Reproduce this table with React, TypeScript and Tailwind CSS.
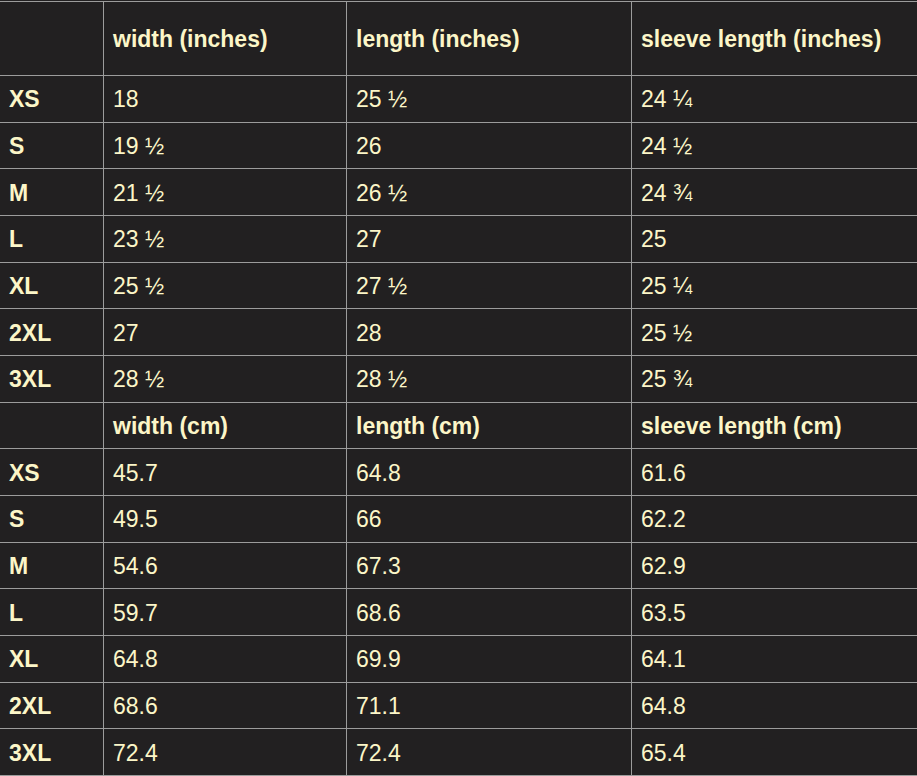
const inches = [
  ["XS", "18", "25 ½", "24 ¼"],
  ["S", "19 ½", "26", "24 ½"],
  ["M", "21 ½", "26 ½", "24 ¾"],
  ["L", "23 ½", "27", "25"],
  ["XL", "25 ½", "27 ½", "25 ¼"],
  ["2XL", "27", "28", "25 ½"],
  ["3XL", "28 ½", "28 ½", "25 ¾"],
];

const cm = [
  ["XS", "45.7", "64.8", "61.6"],
  ["S", "49.5", "66", "62.2"],
  ["M", "54.6", "67.3", "62.9"],
  ["L", "59.7", "68.6", "63.5"],
  ["XL", "64.8", "69.9", "64.1"],
  ["2XL", "68.6", "71.1", "64.8"],
  ["3XL", "72.4", "72.4", "65.4"],
];

function Row({ cells, head, tall }: { cells: string[]; head?: boolean; tall?: boolean }) {
  return (
    <div
      className={`grid grid-cols-[104px_243px_285px_1fr] border-b border-[#9c9c9c] ${
        tall ? "h-[74px]" : "h-[46.67px]"
      }`}
    >
      {cells.map((c, i) => (
        <div
          key={i}
          className={`flex items-center pl-[9px] pt-[2px] ${i < 3 ? "border-r border-[#9c9c9c]" : ""} ${
            head || i === 0 ? "font-bold" : ""
          }`}
        >
          {c}
        </div>
      ))}
    </div>
  );
}

export default function App() {
  return (
    <div className="w-[917px] h-[776px] overflow-hidden bg-[#222021]">
      <div
        className="mt-px border-t border-[#9c9c9c] text-[23px] leading-none text-[#fcf6c8]"
        style={{ fontFamily: '"Liberation Sans", Arial, sans-serif' }}
      >
        <Row cells={["", "width (inches)", "length (inches)", "sleeve length (inches)"]} head tall />
        {inches.map((r) => (
          <Row key={"in" + r[0]} cells={r} />
        ))}
        <Row cells={["", "width (cm)", "length (cm)", "sleeve length (cm)"]} head />
        {cm.map((r) => (
          <Row key={"cm" + r[0]} cells={r} />
        ))}
      </div>
    </div>
  );
}
